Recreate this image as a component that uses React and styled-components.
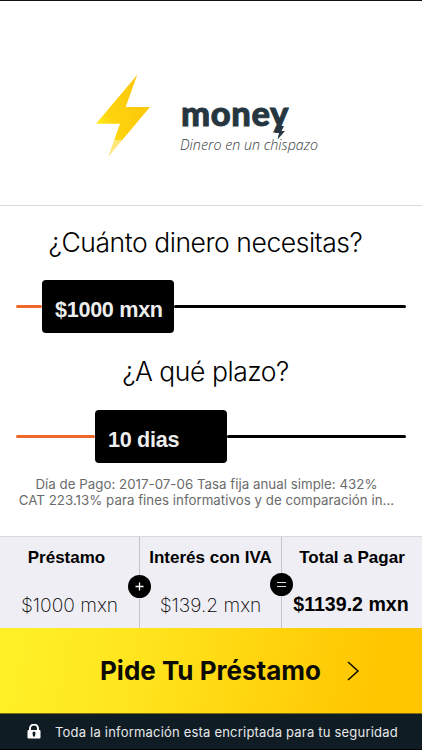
import React from 'react';
import styled, { createGlobalStyle } from 'styled-components';

const GlobalStyle = createGlobalStyle`
  * {
    box-sizing: border-box;
  }

  body {
    margin: 0;
    background: #fff;
    color: #000;
    font-family: Inter, 'Liberation Sans', sans-serif;
  }
`;

const Screen = styled.main`
  width: 422px;
  height: 750px;
  display: flex;
  flex-direction: column;
  overflow: hidden;
  border-top: 1px solid #151017;
  border-bottom: 1px solid #000;
`;

const Header = styled.header`
  height: 205px;
  flex: none;
  display: flex;
  align-items: flex-start;
  padding: 73px 0 0 95px;
  border-bottom: 1px solid #d8dad9;
`;

const Brand = styled.div`
  margin: 16px 0 0 30px;
  color: #263640;
`;

const BrandName = styled.div`
  display: flex;
  height: 46px;
  font: 900 34.5px/46px Lato, sans-serif;
  letter-spacing: 0.6px;
  -webkit-text-stroke: 0.9px #263640;

  svg {
    margin: 36px 0 0 -14px;
    flex: none;
  }
`;

const Slogan = styled.div`
  font: italic 300 14.3px/18px 'Open Sans', sans-serif;
  color: #37393c;
  white-space: nowrap;
  margin: 0 0 0 -1px;
`;

const Question = styled.h2`
  margin: 0;
  height: ${(p) => p.$height}px;
  padding: ${(p) => p.$top}px 11px 0 0;
  text-align: center;
  font-weight: 300;
  font-size: 26.5px;
  line-height: 34px;
  letter-spacing: -0.45px;
  white-space: nowrap;
`;

const Slider = styled.div`
  display: flex;
  align-items: center;
  height: 53px;
  padding: 0 16px;
`;

const Track = styled.span`
  height: 3px;
  border-radius: 2px;
  background: ${(p) => (p.$filled ? '#f0672a' : '#000')};
  ${(p) => (p.$filled ? `width: ${p.$filled}px; flex: none;` : 'flex: 1;')}
`;

const Handle = styled.div`
  width: 132px;
  height: 53px;
  flex: none;
  padding: 7px 0 0 13px;
  border-radius: 4px;
  background: #000;
  color: #ededed;
  font: bold 21.6px/45px 'Liberation Sans', sans-serif;
  letter-spacing: -0.3px;
  white-space: nowrap;
`;

const Terms = styled.p`
  margin: 0;
  padding: 13px 9px 0 0;
  height: 73px;
  text-align: center;
  color: #6b6b6b;
  font-size: 13.3px;
  line-height: 16px;
  letter-spacing: 0.02px;
  white-space: nowrap;

  span {
    display: block;
  }
`;

const Summary = styled.section`
  display: grid;
  grid-template-columns: 140px 142px 140px;
  height: 92px;
  flex: none;
  border-top: 1px solid #dadadd;
  background: #efeef4;
`;

const Cell = styled.div`
  position: relative;
  padding-top: 10px;
  text-align: center;
  white-space: nowrap;
  border-right: ${(p) => (p.$last ? 'none' : '1px solid #c5c4c9')};
`;

const Label = styled.div`
  padding-right: ${(p) => p.$inset || 0}px;
  font: bold 17px/22px 'Liberation Sans', sans-serif;
`;

const Amount = styled.div`
  margin-top: 24px;
  font-size: 19.2px;
  line-height: 24px;
  font-weight: 200;
  ${(p) => p.$strong && "font: bold 19.6px/22px 'Liberation Sans', sans-serif; padding-right: 2px;"}
`;

// sits over the divider between two cells
const Operator = styled.span`
  position: absolute;
  top: ${(p) => p.$top};
  right: -12px;
  z-index: 1;
  width: 23px;
  height: 23px;
  display: grid;
  place-items: center;
  border-radius: 50%;
  background: #000;
`;

const Submit = styled.button`
  height: 86px;
  flex: none;
  display: flex;
  align-items: center;
  gap: 26px;
  padding: 0 0 0 100px;
  border: 0;
  border-bottom: 1px solid #7d6b14;
  background: linear-gradient(100deg, #fff028 3%, #ffe61f 30%, #ffc600 88%);
  color: #0b0a05;
  font: 700 26px/34px Inter, sans-serif;
  white-space: nowrap;
`;

const Secure = styled.footer`
  flex: 1;
  display: flex;
  align-items: center;
  gap: 14px;
  padding-left: 27px;
  background: #101c24;
  color: #e6e8e9;
  font-size: 13px;
  letter-spacing: 0.2px;
  white-space: nowrap;
`;

function Bolt() {
  return (
    <svg width="56" height="84" viewBox="0 0 56 84">
      <defs>
        <linearGradient id="bolt" x1="0" y1="0.7" x2="0.8" y2="0.3">
          <stop offset="0" stopColor="#ffea1c" />
          <stop offset="0.3" stopColor="#fdd40d" />
          <stop offset="1" stopColor="#fcc80b" />
        </linearGradient>
      </defs>
      <path d="M42.300 0.700L1 49.700h24L19.200 66h8.100L55 33H30.700z" fill="url(#bolt)" />
      <path d="M19.200 66L13.300 82.700 27.300 66z" fill="#fde77c" />
    </svg>
  );
}

export default function App() {
  return (
    <Screen>
      <GlobalStyle />
      <Header>
        <Bolt />
        <Brand>
          <BrandName>
            <span>money</span>
            <svg width="12" height="14" viewBox="0 0 12 14">
              <path d="M4 0L0 7h4L2.500 13.500 10 5H6.500L9 0z" fill="#263640" />
            </svg>
          </BrandName>
          <Slogan>Dinero en un chispazo</Slogan>
        </Brand>
      </Header>

      <Question $height={74} $top={19}>¿Cuánto dinero necesitas?</Question>
      <Slider>
        <Track $filled={26} />
        <Handle>$1000 mxn</Handle>
        <Track />
      </Slider>

      <Question $height={77} $top={21}>¿A qué plazo?</Question>
      <Slider>
        <Track $filled={79} />
        <Handle>10 dias</Handle>
        <Track />
      </Slider>

      <Terms>
        <span>Día de Pago: 2017-07-06 Tasa fija anual simple: 432%</span>
        <span>CAT 223.13% para fines informativos y de comparación in...</span>
      </Terms>

      <Summary>
        <Cell>
          <Label $inset={6}>Préstamo</Label>
          <Amount>$1000 mxn</Amount>
          <Operator $top="38px">
            <svg width="9" height="9" viewBox="0 0 9 9" stroke="#fff" strokeWidth="1.300">
              <path d="M4.500 0.500v8M0.500 4.500h8" />
            </svg>
          </Operator>
        </Cell>
        <Cell>
          <Label>Interés con IVA</Label>
          <Amount>$139.2 mxn</Amount>
          <Operator $top="36px">
            <svg width="9" height="7" viewBox="0 0 9 7" stroke="#ddd" strokeWidth="1">
              <path d="M0 1.500h9M0 5.500h9" />
            </svg>
          </Operator>
        </Cell>
        <Cell $last>
          <Label>Total a Pagar</Label>
          <Amount $strong>$1139.2 mxn</Amount>
        </Cell>
      </Summary>

      <Submit>
        Pide Tu Préstamo
        <svg width="13" height="20" viewBox="0 0 13 20" fill="none" stroke="#0b0a05" strokeWidth="1.500">
          <path d="M1 1l10 9L1 19" />
        </svg>
      </Submit>

      <Secure>
        <svg width="14" height="15" viewBox="0 0 14 15">
          <path d="M3 7V4.500a4 4 0 0 1 8 0V7" fill="none" stroke="#fff" strokeWidth="2" />
          <rect x="0.500" y="6" width="13" height="8.500" rx="1" fill="#fff" />
          <path d="M5.500 9a1.500 1.500 0 0 1 3 0L8 12.500H6z" fill="#101c24" />
        </svg>
        Toda la información esta encriptada para tu seguridad
      </Secure>
    </Screen>
  );
}
